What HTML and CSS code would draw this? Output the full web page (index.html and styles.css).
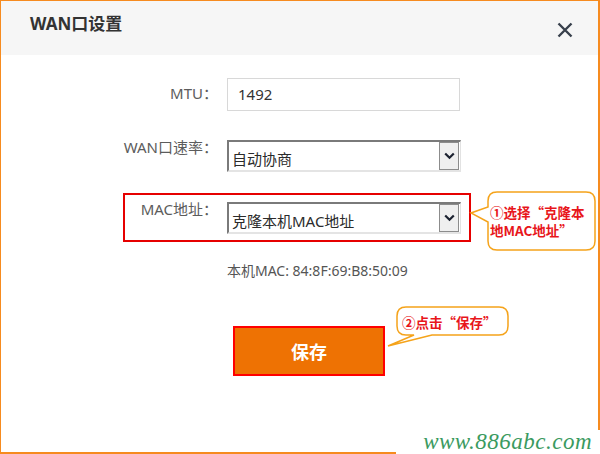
FILE: index.html
```html
<!DOCTYPE html>
<html lang="zh-CN">
<head>
<meta charset="utf-8">
<title>WAN口设置</title>
<link rel="stylesheet" href="styles.css">
</head>
<body>
<div class="frame">
  <div class="header">
    <h1 class="title">WAN口设置</h1>
    <svg class="close" width="16" height="16" viewBox="0 0 16 16"><path d="M1.5 1.5 L14.5 14.5 M14.5 1.5 L1.5 14.5" stroke="#38404c" stroke-width="2.4" fill="none"/></svg>
  </div>
  <div class="form">
    <div class="row row-mtu">
      <span class="label">MTU：</span>
      <div class="input">1492</div>
    </div>
    <div class="row row-speed">
      <span class="label label-sel">WAN口速率：</span>
      <div class="select">
        <span class="select-text">自动协商</span>
        <span class="select-btn"><svg width="11" height="8" viewBox="0 0 11 8"><path d="M1.2 1.5 L5.5 5.8 L9.8 1.5" stroke="#1c2230" stroke-width="2.2" fill="none"/></svg></span>
      </div>
    </div>
    <div class="highlight">
      <div class="row">
        <span class="label label-sel label-mac">MAC地址：</span>
        <div class="select">
          <span class="select-text">克隆本机MAC地址</span>
          <span class="select-btn"><svg width="11" height="8" viewBox="0 0 11 8"><path d="M1.2 1.5 L5.5 5.8 L9.8 1.5" stroke="#1c2230" stroke-width="2.2" fill="none"/></svg></span>
        </div>
      </div>
    </div>
    <div class="mac-info">本机MAC: 84:8F:69:B8:50:09</div>
    <button class="save">保存</button>
  </div>

  <div class="callout callout-1">
    <svg width="131" height="66" viewBox="468 188 131 66"><path d="M497 192 H586 Q595 192 595 201 V241 Q595 250 586 250 H497 Q488 250 488 241 V222 L471 213 L488 207 V201 Q488 192 497 192 Z" fill="#fff" stroke="#f5a31a" stroke-width="1.5"/></svg>
    <div class="callout-text ct-1">①选择“克隆本<br>地MAC地址”</div>
  </div>
  <div class="callout callout-2">
    <svg width="124" height="44" viewBox="386 304 124 44"><path d="M406 307 H499 Q508 307 508 316 V326 Q508 335 499 335 H432 L388 346 L414 335 H406 Q397 335 397 326 V316 Q397 307 406 307 Z" fill="#fff" stroke="#f5a31a" stroke-width="1.5"/></svg>
    <div class="callout-text ct-2">②点击“保存”</div>
  </div>
</div>
<div class="watermark">www.886abc.com</div>
</body>
</html>
```
FILE: styles.css
```css
html, body {
  margin: 0;
  padding: 0;
  background: #fff;
}
body {
  position: relative;
  width: 600px;
  height: 454px;
  overflow: hidden;
  font-family: "Noto Sans", "Noto Sans CJK SC", sans-serif;
}
.frame {
  position: relative;
  width: 600px;
  height: 454px;
  box-sizing: border-box;
  border-style: solid;
  border-color: #f68b1f;
  border-width: 1px 2px 2px 1px;
  background: #fff;
}
.header {
  height: 54px;
  background: #f6f6f6;
  display: flex;
  justify-content: space-between;
  align-items: flex-start;
  padding: 12px 25px 0 29px;
  box-sizing: border-box;
}
.title {
  margin: 0;
  font-size: 17px;
  line-height: 22px;
  font-weight: bold;
  color: #333;
}
.close {
  display: block;
  margin-top: 9px;
}
.form {
  padding-top: 23px;
}
.row {
  display: flex;
  align-items: flex-start;
}
.label {
  width: 217px;
  text-align: right;
  font-size: 15px;
  line-height: 20px;
  color: #5c5c5c;
  margin-right: 9px;
  flex: none;
}
.row-mtu .label {
  margin-top: 5px;
}
.label-sel {
  margin-top: -3px;
}
.label-mac {
  width: 93px;
}
.row-mtu {
  margin-bottom: 29px;
}
.row-speed {
  margin-bottom: 21px;
}
.input {
  width: 233px;
  height: 33px;
  box-sizing: border-box;
  border: 1px solid #d8d8d8;
  padding-left: 10px;
  font-size: 15px;
  line-height: 31px;
  color: #333;
}
.select {
  width: 234px;
  height: 32px;
  box-sizing: border-box;
  border-style: solid;
  border-width: 2px 1px 2px 2px;
  border-color: #7a7a7a #e2e2e2 #e4e4e4 #7a7a7a;
  display: flex;
  align-items: flex-end;
  background: #fff;
}
.select-text {
  flex: 1;
  padding-left: 3px;
  font-size: 15px;
  line-height: 20px;
  margin-bottom: 1px;
  color: #2b2b2b;
}
.select-btn {
  width: 20px;
  height: 28px;
  box-sizing: border-box;
  border: 1px solid #8c8c8c;
  background: #efefef;
  display: flex;
  align-items: center;
  justify-content: center;
  margin-right: 1px;
}
.select-btn svg {
  display: block;
}
.highlight {
  margin-left: 122px;
  width: 348px;
  height: 49px;
  box-sizing: border-box;
  border: 2px solid #e60000;
  padding-top: 7px;
}
.mac-info {
  margin-top: 19px;
  padding-left: 226px;
  font-size: 14px;
  line-height: 20px;
  color: #555;
}
.save {
  display: block;
  margin: 45px 0 0 232px;
  width: 152px;
  height: 50px;
  box-sizing: border-box;
  border: 2px solid #ff0000;
  background: #ee7203;
  color: #fff;
  font-family: "Noto Sans CJK SC", sans-serif;
  font-size: 18px;
  font-weight: bold;
  padding: 0;
}
.callout {
  position: absolute;
}
.callout svg {
  display: block;
}
.callout-1 {
  left: 467px;
  top: 187px;
  width: 131px;
  height: 66px;
}
.callout-2 {
  left: 385px;
  top: 303px;
  width: 124px;
  height: 44px;
}
.callout-text {
  position: absolute;
  font-family: "Noto Sans CJK SC", sans-serif;
  font-size: 13.5px;
  font-weight: bold;
  color: #e8161b;
  line-height: 18px;
  white-space: nowrap;
}
.ct-1 {
  left: 22px;
  top: 15px;
}
.ct-2 {
  left: 16px;
  top: 9px;
}
.watermark {
  position: absolute;
  left: 396px;
  top: 430px;
  width: 204px;
  height: 24px;
  background: #fff;
  font-family: "Liberation Serif", serif;
  font-style: italic;
  font-size: 23px;
  line-height: 24px;
  color: #3a9a60;
  text-align: right;
  padding-right: 8px;
  box-sizing: border-box;
  letter-spacing: 0.5px;
}
```
